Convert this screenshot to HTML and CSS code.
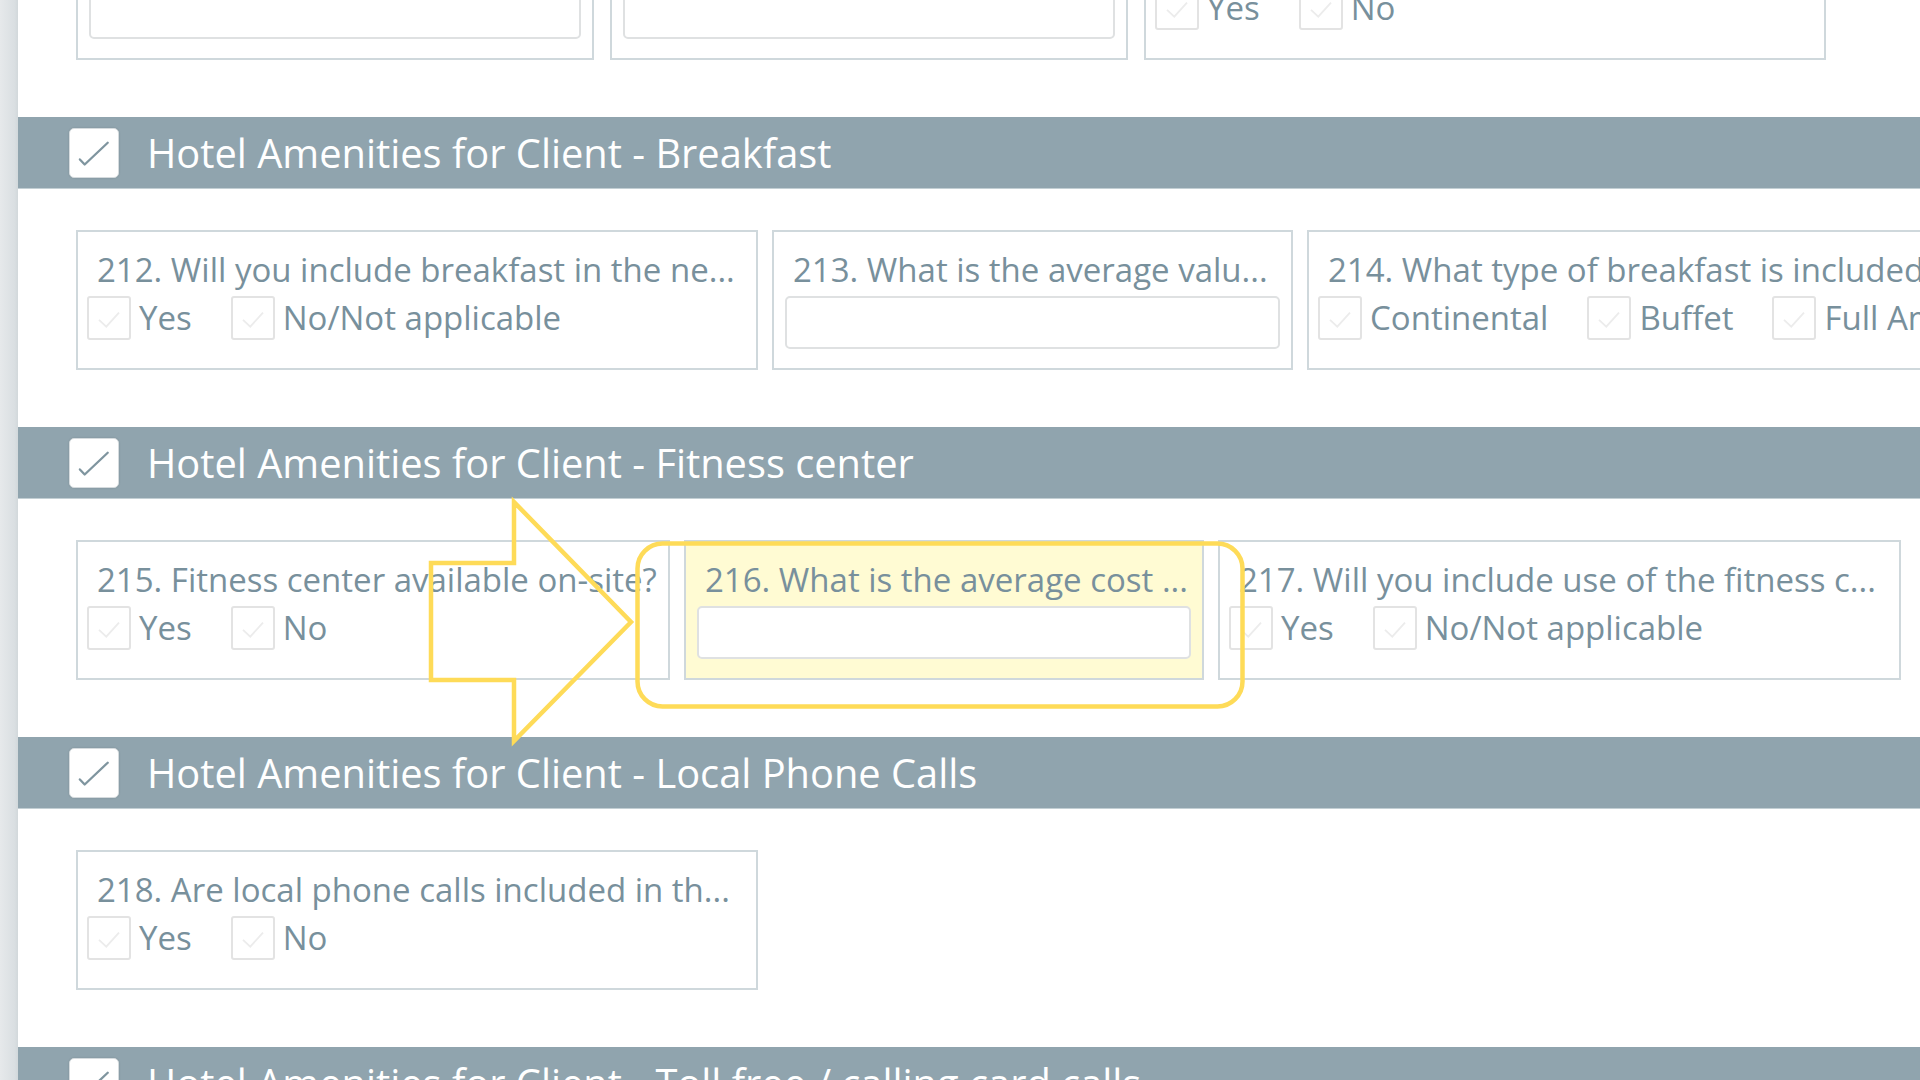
FILE: index.html
```html
<!DOCTYPE html>
<html lang="en">
<head>
<meta charset="utf-8">
<title>Hotel Amenities for Client</title>
<link rel="stylesheet" href="styles.css">
</head>
<body>
<div class="page">
  <aside class="rail"></aside>
  <main class="content">
    <div class="cards cards-first">
      <div class="card w518">
        <div class="q q-hidden"></div>
        <div class="field"></div>
      </div>
      <div class="card w518">
        <div class="q q-hidden"></div>
        <div class="field"></div>
      </div>
      <div class="card w682">
        <div class="q q-hidden"></div>
        <div class="opts">
          <label class="opt"><span class="cb"><svg viewBox="0 0 44 44"><polyline points="11,24 19,31.5 33,16"/></svg></span>Yes</label>
          <label class="opt"><span class="cb"><svg viewBox="0 0 44 44"><polyline points="11,24 19,31.5 33,16"/></svg></span>No</label>
        </div>
      </div>
    </div>

    <section class="group">
      <header class="head">
        <span class="hbox"><svg viewBox="0 0 50 50"><polyline points="10.3,31.7 15.3,37 39.3,14.3"/></svg></span>
        <span class="htitle">Hotel Amenities for Client - Breakfast</span>
      </header>
      <div class="cards">
        <div class="card w682">
          <div class="q">212. Will you include breakfast in the ne...</div>
          <div class="opts">
            <label class="opt"><span class="cb"><svg viewBox="0 0 44 44"><polyline points="11,24 19,31.5 33,16"/></svg></span>Yes</label>
            <label class="opt"><span class="cb"><svg viewBox="0 0 44 44"><polyline points="11,24 19,31.5 33,16"/></svg></span>No/Not applicable</label>
          </div>
        </div>
        <div class="card w521">
          <div class="q">213. What is the average valu...</div>
          <div class="field"></div>
        </div>
        <div class="card w682">
          <div class="q">214. What type of breakfast is included</div>
          <div class="opts">
            <label class="opt"><span class="cb"><svg viewBox="0 0 44 44"><polyline points="11,24 19,31.5 33,16"/></svg></span>Continental</label>
            <label class="opt"><span class="cb"><svg viewBox="0 0 44 44"><polyline points="11,24 19,31.5 33,16"/></svg></span>Buffet</label>
            <label class="opt"><span class="cb"><svg viewBox="0 0 44 44"><polyline points="11,24 19,31.5 33,16"/></svg></span>Full American</label>
          </div>
        </div>
      </div>
    </section>

    <section class="group">
      <header class="head">
        <span class="hbox"><svg viewBox="0 0 50 50"><polyline points="10.3,31.7 15.3,37 39.3,14.3"/></svg></span>
        <span class="htitle">Hotel Amenities for Client - Fitness center</span>
      </header>
      <div class="cards">
        <div class="card w594">
          <div class="q">215. Fitness center available on-site?</div>
          <div class="opts">
            <label class="opt"><span class="cb"><svg viewBox="0 0 44 44"><polyline points="11,24 19,31.5 33,16"/></svg></span>Yes</label>
            <label class="opt"><span class="cb"><svg viewBox="0 0 44 44"><polyline points="11,24 19,31.5 33,16"/></svg></span>No</label>
          </div>
        </div>
        <div class="card w520 card-hl">
          <div class="q">216. What is the average cost ...</div>
          <div class="field"></div>
        </div>
        <div class="card w683">
          <div class="q">217. Will you include use of the fitness c...</div>
          <div class="opts">
            <label class="opt"><span class="cb"><svg viewBox="0 0 44 44"><polyline points="11,24 19,31.5 33,16"/></svg></span>Yes</label>
            <label class="opt"><span class="cb"><svg viewBox="0 0 44 44"><polyline points="11,24 19,31.5 33,16"/></svg></span>No/Not applicable</label>
          </div>
        </div>
      </div>
    </section>

    <section class="group">
      <header class="head">
        <span class="hbox"><svg viewBox="0 0 50 50"><polyline points="10.3,31.7 15.3,37 39.3,14.3"/></svg></span>
        <span class="htitle">Hotel Amenities for Client - Local Phone Calls</span>
      </header>
      <div class="cards">
        <div class="card w682">
          <div class="q">218. Are local phone calls included in th...</div>
          <div class="opts">
            <label class="opt"><span class="cb"><svg viewBox="0 0 44 44"><polyline points="11,24 19,31.5 33,16"/></svg></span>Yes</label>
            <label class="opt"><span class="cb"><svg viewBox="0 0 44 44"><polyline points="11,24 19,31.5 33,16"/></svg></span>No</label>
          </div>
        </div>
      </div>
    </section>

    <section class="group">
      <header class="head">
        <span class="hbox"><svg viewBox="0 0 50 50"><polyline points="10.3,31.7 15.3,37 39.3,14.3"/></svg></span>
        <span class="htitle">Hotel Amenities for Client - Toll free / calling card calls</span>
      </header>
    </section>
  </main>

  <svg class="annot" viewBox="0 0 1920 1080" width="1920" height="1080">
    <polygon class="arrow" points="431,563 514,563 514,502 631,622 514,741 514,680 431,680"/>
    <rect class="ring" x="637.5" y="543.5" width="605" height="163" rx="25" ry="25"/>
  </svg>
</div>
</body>
</html>
```

FILE: styles.css
```css
html, body {
  margin: 0;
  padding: 0;
  background: #ffffff;
  overflow: hidden;
}

body {
  font-family: "Open Sans", "Noto Sans", sans-serif;
}

.page {
  position: relative;
  display: flex;
  width: 1920px;
  height: 1080px;
  overflow: hidden;
}

.rail {
  flex: none;
  width: 18px;
  background: linear-gradient(to right, #e6e9eb, #dadfe2 80%, #d2d8db);
}

.content {
  flex: 1;
  min-width: 0;
}

.cards {
  display: flex;
  gap: 14px;
  padding-left: 58px;
  margin-top: 41px;
}

.cards-first {
  margin-top: -80px;
  gap: 16px;
}

.card {
  flex: none;
  box-sizing: border-box;
  height: 140px;
  border: 2px solid #cfd8dc;
  background: #ffffff;
  padding: 18px 11px 0 9px;
  overflow: hidden;
}

.card-hl {
  background: #fffbd3;
}

.w518 { width: 518px; }
.w520 { width: 520px; }
.w521 { width: 521px; }
.w594 { width: 594px; }
.w682 { width: 682px; }
.w683 { width: 683px; }

.q {
  height: 40px;
  padding-left: 10px;
  font-size: 33px;
  line-height: 40px;
  color: #78909c;
  white-space: nowrap;
  overflow: hidden;
}

.opts {
  display: flex;
  align-items: center;
  height: 44px;
  margin-top: 6px;
  white-space: nowrap;
}

.opt {
  display: flex;
  align-items: center;
  gap: 8px;
  margin-right: 39px;
  font-size: 33px;
  line-height: 44px;
  color: #78909c;
}

.cb {
  flex: none;
  box-sizing: border-box;
  width: 44px;
  height: 44px;
  border: 2px solid #e3e3e3;
  border-radius: 3px;
  background: #ffffff;
}

.cb svg {
  display: block;
  width: 40px;
  height: 40px;
  fill: none;
  stroke: #ececec;
  stroke-width: 2;
}

.field {
  box-sizing: border-box;
  height: 53px;
  margin-top: 6px;
  margin-left: 2px;
  border: 2px solid #dfe1e2;
  border-radius: 5px;
  background: #ffffff;
}

.head {
  display: flex;
  align-items: center;
  gap: 28px;
  box-sizing: border-box;
  height: 72px;
  margin-top: 57px;
  padding-left: 51px;
  background: #90a4ae;
  border-bottom: 1px solid #c3cfd4;
}

.hbox {
  flex: none;
  box-sizing: border-box;
  width: 50px;
  height: 50px;
  border: 1px solid #d5dbde;
  border-radius: 5px;
  background: #ffffff;
  box-shadow: 0 0 2px rgba(0, 0, 0, 0.15);
}

.hbox svg {
  display: block;
  width: 48px;
  height: 48px;
  fill: none;
  stroke: #7f959f;
  stroke-width: 2.4;
  stroke-linecap: round;
  stroke-linejoin: round;
}

.htitle {
  font-size: 39.8px;
  line-height: 40px;
  color: #ffffff;
  white-space: nowrap;
}

.annot {
  position: absolute;
  top: 0;
  left: 0;
  pointer-events: none;
}

.arrow, .ring {
  fill: none;
  stroke: #fedb58;
  stroke-width: 4.5;
}

.arrow {
  stroke-linejoin: miter;
  stroke-miterlimit: 10;
}
```
